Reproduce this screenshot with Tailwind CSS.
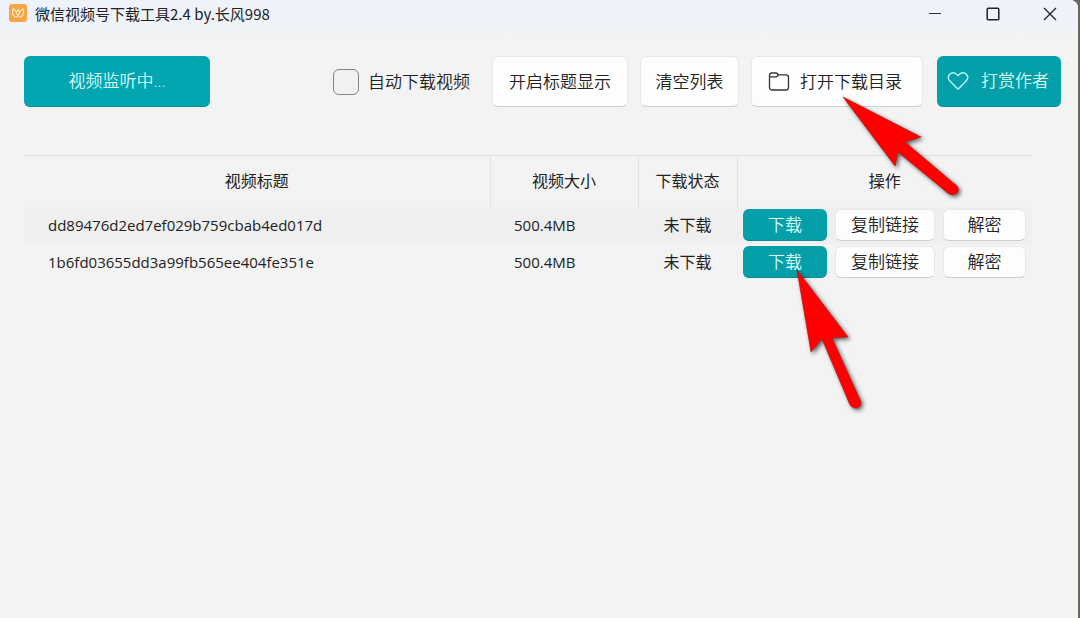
<!doctype html>
<html lang="zh-CN">

<head>
  <meta charset="utf-8">
  <meta name="viewport" content="width=device-width,initial-scale=1">
  <title>微信视频号下载工具2.4 by.长风998</title>
  <script src="https://cdn.jsdelivr.net/npm/@tailwindcss/browser@4"></script>
</head>

<body class="bg-[#6b675c]">
  <div class="relative min-h-screen mr-[2px] rounded-tr-lg bg-[#f3f3f3] text-[#222] font-['Open_Sans','Noto_Sans_CJK_SC',sans-serif]">
    <!-- title bar -->
    <header class="flex items-center h-9 pb-2 pl-2 rounded-tr-lg bg-linear-to-b from-[#eef3fb] from-60% to-[#f3f3f3]">
      <svg class="size-5" viewBox="0 0 20 20" fill="none">
        <rect x="1" y="0" width="18" height="18" rx="3" fill="#f5a545" />
        <path d="M6.500 12.800C5 11.500 4.300 8.500 4.400 6C4.500 4.600 5.800 4.600 6.600 5.800L10 11.500L13.400 5.800C14.200 4.600 15.500 4.600 15.600 6C15.700 8.500 15 11.500 13.500 12.800C12.300 13.600 11.200 12.900 10 11.500C8.800 12.900 7.700 13.600 6.500 12.800ZM8.300 8.600L10 5.600L11.700 8.600" stroke="#ffe9c8" stroke-width="1.100" stroke-linejoin="round" />
      </svg>
      <h1 class="ml-[7px] text-[15px] leading-7 font-['Noto_Sans_CJK_SC',sans-serif]">微信视频号下载工具2.4 by.长风998</h1>
      <div class="ml-auto flex">
        <button type="button" aria-label="最小化" class="grid place-items-center w-[58px] h-7">
          <svg class="size-4" viewBox="0 0 16 16" fill="none" stroke="#333"><path d="M2 7.500h12" /></svg>
        </button>
        <button type="button" aria-label="最大化" class="grid place-items-center w-[58px] h-7">
          <svg class="size-4" viewBox="0 0 16 16" fill="none" stroke="#222" stroke-width="1.500"><rect x="2.200" y="2.200" width="11.600" height="11.600" rx="1" /></svg>
        </button>
        <button type="button" aria-label="关闭" class="grid place-items-center w-[56px] h-7">
          <svg class="size-4" viewBox="0 0 16 16" fill="none" stroke="#222" stroke-width="1.300"><path d="M2 2l12 12M14 2L2 14" /></svg>
        </button>
      </div>
    </header>

    <!-- toolbar -->
    <div class="flex items-center gap-3 mt-5 pl-6 pr-[17px] text-[17px] font-[350] whitespace-nowrap">
      <button type="button" class="w-[186px] h-[51px] rounded-md border-b border-[#078d94] bg-[#03a5b0] text-[#d8fbfb]">视频监听中...</button>
      <label class="ml-auto mr-[10px] flex items-center gap-[9px]">
        <input type="checkbox" class="appearance-none size-[26px] rounded-md border border-[#858585] bg-[#f1f1f1]">
        自动下载视频
      </label>
      <button type="button" class="w-[136px] h-[51px] rounded-md border border-[#e8e8e8] border-b-[#cfcfcf] bg-[#fdfdfd]">开启标题显示</button>
      <button type="button" class="w-[99px] h-[51px] rounded-md border border-[#e8e8e8] border-b-[#cfcfcf] bg-[#fdfdfd]">清空列表</button>
      <button type="button" class="flex items-center justify-center gap-[10px] w-[172px] h-[51px] pr-1 rounded-md border border-[#e8e8e8] border-b-[#cfcfcf] bg-[#fdfdfd]">
        <svg class="size-[22px]" viewBox="0 0 22 22" fill="none" stroke="#333" stroke-width="1.300" stroke-linejoin="round">
          <path d="M1.500 4.500a2.500 2.500 0 0 1 2.500-2.500h4c1 0 1.500.5 2.200 1.900h7.800a2.500 2.500 0 0 1 2.500 2.500v10.100a2.500 2.500 0 0 1-2.500 2.500H4a2.500 2.500 0 0 1-2.500-2.500z" />
          <path d="M1.500 5.800h6.500c1.200 0 1.700-.9 2.200-1.900" />
        </svg>
        打开下载目录
      </button>
      <button type="button" class="ml-[2px] flex items-center justify-center gap-3 w-[124px] h-[51px] pr-[2px] rounded-md border-b border-[#078d94] bg-[#049fa8] text-[#d8fbfb]">
        <svg class="size-[22px]" viewBox="0 0 22 22" fill="none" stroke="#b4fafa" stroke-width="1.400" stroke-linejoin="round">
          <path d="M11 19.200L2.900 11C.9 8.900.9 6.100 2.800 4.200s4.900-1.900 6.700 0L11 5.700l1.500-1.500c1.800-1.900 4.800-1.900 6.700 0s1.900 4.700-.1 6.800z" />
        </svg>
        打赏作者
      </button>
    </div>

    <!-- video list -->
    <div class="mt-12 ml-6 mr-[46px]">
      <table class="w-full table-fixed border-collapse text-base">
        <colgroup>
          <col>
          <col class="w-[148px]">
          <col class="w-[99px]">
          <col class="w-[295px]">
        </colgroup>
        <thead>
          <tr class="h-[51px] border-t border-[#e0e0e0]">
            <th scope="col" class="font-normal border-r border-[#e2e2e2]">视频标题</th>
            <th scope="col" class="font-normal border-r border-[#e2e2e2]">视频大小</th>
            <th scope="col" class="font-normal border-r border-[#e2e2e2]">下载状态</th>
            <th scope="col" class="font-normal">操作</th>
          </tr>
        </thead>
        <tbody>
          <tr class="h-[37px] bg-[#efefef]">
            <td class="pl-6 text-[15px]">dd89476d2ed7ef029b759cbab4ed017d</td>
            <td class="pl-6 text-[15px]">500.4MB</td>
            <td class="text-center">未下载</td>
            <td class="pl-[6px]">
              <div class="flex gap-2 text-[17px] font-[350]">
                <button type="button" class="w-[84px] h-8 rounded-md border-b border-[#078d94] bg-[#049fa8] text-[#d8fbfb]">下载</button>
                <button type="button" class="w-[100px] h-8 rounded-md border border-[#e8e8e8] border-b-[#cfcfcf] bg-[#fdfdfd]">复制链接</button>
                <button type="button" class="w-[83px] h-8 rounded-md border border-[#e8e8e8] border-b-[#cfcfcf] bg-[#fdfdfd]">解密</button>
              </div>
            </td>
          </tr>
          <tr class="h-[37px]">
            <td class="pl-6 text-[15px]">1b6fd03655dd3a99fb565ee404fe351e</td>
            <td class="pl-6 text-[15px]">500.4MB</td>
            <td class="text-center">未下载</td>
            <td class="pl-[6px]">
              <div class="flex gap-2 text-[17px] font-[350]">
                <button type="button" class="w-[84px] h-8 rounded-md border-b border-[#078d94] bg-[#049fa8] text-[#d8fbfb]">下载</button>
                <button type="button" class="w-[100px] h-8 rounded-md border border-[#e8e8e8] border-b-[#cfcfcf] bg-[#fdfdfd]">复制链接</button>
                <button type="button" class="w-[83px] h-8 rounded-md border border-[#e8e8e8] border-b-[#cfcfcf] bg-[#fdfdfd]">解密</button>
              </div>
            </td>
          </tr>
        </tbody>
      </table>
    </div>

    <!-- pointer arrows -->
    <svg class="absolute top-[90px] right-[108px] w-[130px] h-[120px] pointer-events-none drop-shadow-[2px_2px_2px_rgba(0,0,0,0.6)]" viewBox="840 90 130 120">
      <path d="M843 97L921 137L905 142L957 186Q960 190 957 193Q954 196 949 194L898 152L895 166Z" fill="#fe0000" stroke="#b01010" stroke-width=".6" />
    </svg>
    <svg class="absolute top-[260px] right-[198px] w-[90px] h-[160px] pointer-events-none drop-shadow-[2px_2px_2px_rgba(0,0,0,0.6)]" viewBox="790 260 90 160">
      <path d="M797 270L848 337L832 338L861 402Q861 407 857 408Q853 409 850 405L822 339L811 352Z" fill="#fe0000" stroke="#b01010" stroke-width=".6" />
    </svg>
  </div>
</body>

</html>
